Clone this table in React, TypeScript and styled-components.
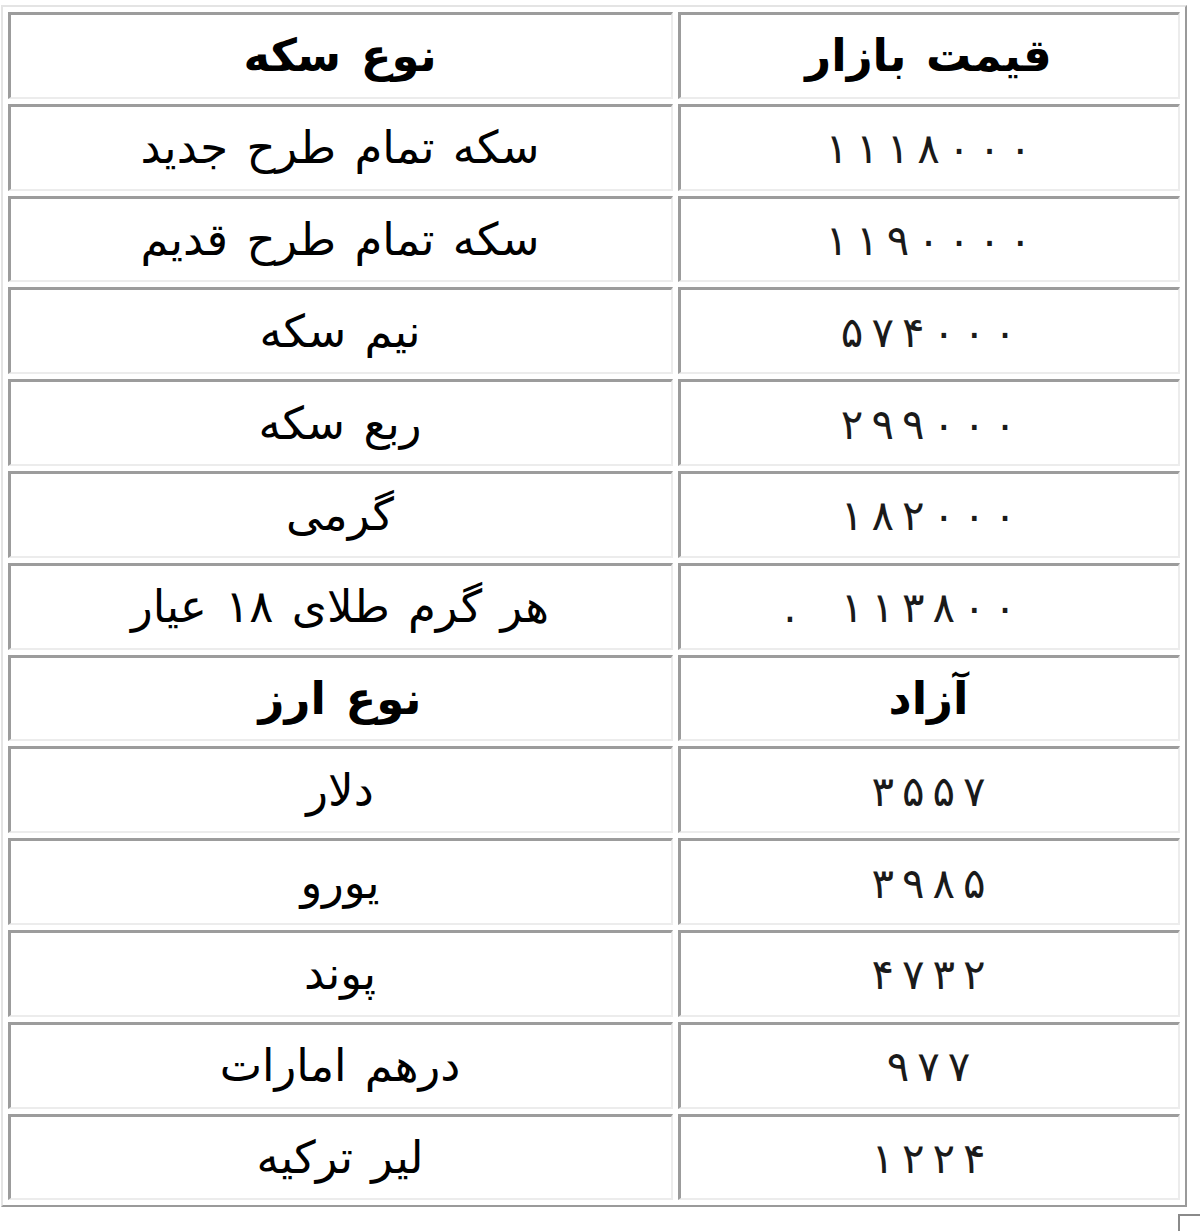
import styled, { createGlobalStyle } from 'styled-components'

const GlobalStyle = createGlobalStyle`
  html, body {
    margin: 0;
    padding: 0;
    background: #fff;
  }
  body {
    font-family: Tahoma, "DejaVu Sans", sans-serif;
  }
`

const Page = styled.div`
  width: 1200px;
  height: 1231px;
  overflow: hidden;
  background: #fff;
  padding: 5px 0 0 1px;
  box-sizing: border-box;
`

const PriceTable = styled.table`
  width: 1186px;
  border-collapse: separate;
  border-spacing: 5px 5px;
  border-style: solid;
  border-width: 2px;
  border-color: #e4e4e4 #9a9a9a #9a9a9a #e4e4e4;
  table-layout: fixed;
`

const Cell = styled.td<{ $bold?: boolean }>`
  height: 86.8px;
  padding: 0;
  box-sizing: border-box;
  border-style: solid;
  border-width: 3px 2px 2px 3px;
  border-color: #9c9c9c #ececec #ececec #9c9c9c;
  text-align: center;
  vertical-align: middle;
  direction: rtl;
  white-space: pre;
  font-family: "DejaVu Sans", sans-serif;
  font-size: 45px;
  font-weight: ${({ $bold }) => ($bold ? 700 : 400)};
  word-spacing: 4px;
  color: #000;
`

const Number = styled.span`
  direction: ltr;
  unicode-bidi: isolate;
  display: inline-block;
  font-size: 42px;
  color: #1a1a1a;
  white-space: nowrap;
`

const Digit = styled.span`
  display: inline-block;
  padding: 0 4px;
`

const Dot = styled.span`
  display: inline-block;
  width: 14px;
  margin-left: -54px;
  margin-right: 40px;
  text-align: center;
`

const Corner = styled.div`
  margin: 7px 0 0 1177px;
  width: 22px;
  height: 20px;
  border-top: 2px solid #8a8a8a;
  border-left: 2px solid #8a8a8a;
  box-sizing: border-box;
`

type Row = { name: string; price: string; head?: boolean; dot?: boolean }

const rows: Row[] = [
  { name: 'نوع سکه', price: 'قیمت بازار', head: true },
  { name: 'سکه تمام طرح جدید', price: '۱۱۱۸۰۰۰' },
  { name: 'سکه تمام طرح قدیم', price: '۱۱۹۰۰۰۰' },
  { name: 'نیم سکه', price: '۵۷۴۰۰۰' },
  { name: 'ربع سکه', price: '۲۹۹۰۰۰' },
  { name: 'گرمی', price: '۱۸۲۰۰۰' },
  { name: 'هر گرم طلای ۱۸ عیار', price: '۱۱۳۸۰۰', dot: true },
  { name: 'نوع ارز', price: 'آزاد', head: true },
  { name: 'دلار', price: '۳۵۵۷' },
  { name: 'یورو', price: '۳۹۸۵' },
  { name: 'پوند', price: '۴۷۳۲' },
  { name: 'درهم امارات', price: '۹۷۷' },
  { name: 'لیر ترکیه', price: '۱۲۲۴' },
]

const Price = ({ value, dot }: { value: string; dot?: boolean }) => (
  <Number>
    {dot && <Dot>.</Dot>}
    {Array.from(value).map((d, i) => (
      <Digit key={i}>{d}</Digit>
    ))}
  </Number>
)

export default function App() {
  return (
    <Page>
      <GlobalStyle />
      <PriceTable>
        <colgroup>
          <col style={{ width: '665px' }} />
          <col />
        </colgroup>
        <tbody>
          {rows.map((r) => (
            <tr key={r.name}>
              <Cell $bold={r.head}>{r.name}</Cell>
              <Cell $bold={r.head}>{r.head ? r.price : <Price value={r.price} dot={r.dot} />}</Cell>
            </tr>
          ))}
        </tbody>
      </PriceTable>
      <Corner />
    </Page>
  )
}
